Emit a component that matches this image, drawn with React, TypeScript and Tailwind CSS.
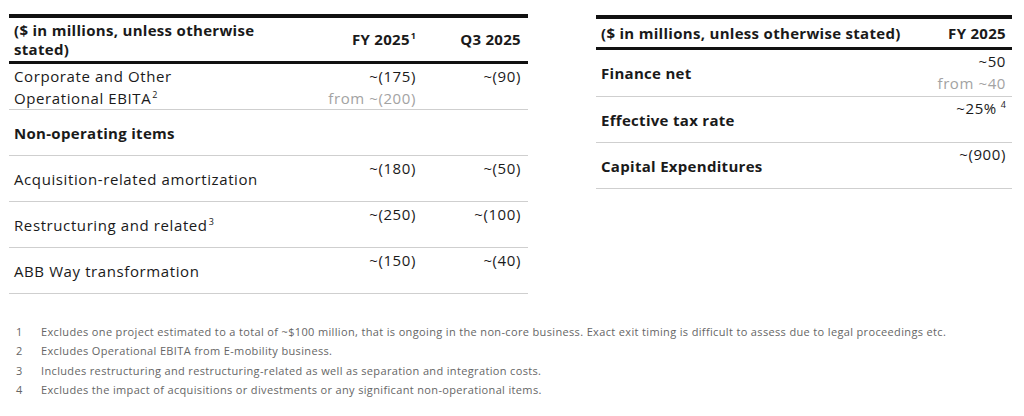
const font = { fontFamily: '"Open Sans", "Noto Sans", sans-serif' };

const Sup = ({ children, className = "" }: { children: React.ReactNode; className?: string }) => (
  <sup className={`text-[9px] tracking-normal relative -top-[6px] ${className}`}>{children}</sup>
);

type LeftRow = {
  label: React.ReactNode;
  fy?: React.ReactNode;
  q3?: React.ReactNode;
  bold?: boolean;
};

const leftRows: LeftRow[] = [
  { label: "Non-operating items", bold: true },
  { label: "Acquisition-related amortization", fy: "~(180)", q3: "~(50)" },
  {
    label: (
      <>
        Restructuring and related<Sup className="ml-[1px]">3</Sup>
      </>
    ),
    fy: "~(250)",
    q3: "~(100)",
  },
  { label: "ABB Way transformation", fy: "~(150)", q3: "~(40)" },
];

const rightRows = [
  {
    label: "Effective tax rate",
    value: (
      <>
        ~25%<Sup className="ml-[4px]">4</Sup>
      </>
    ),
  },
  { label: "Capital Expenditures", value: "~(900)" },
];

const notes = [
  "Excludes one project estimated to a total of ~$100 million, that is ongoing in the non-core business. Exact exit timing is difficult to assess due to legal proceedings etc.",
  "Excludes Operational EBITA from E-mobility business.",
  "Includes restructuring and restructuring-related as well as separation and integration costs.",
  "Excludes the impact of acquisitions or divestments or any significant non-operational items.",
];

export default function App() {
  return (
    <div className="w-[1024px] h-[416px] bg-white text-[#1a1a1a] overflow-hidden" style={font}>
      <div className="flex pt-[14px] pl-[9px]">
        {/* Left table */}
        <div className="w-[519px] text-[15px] leading-[22px] tracking-[0.6px]">
          <div className="grid grid-cols-[1fr_110px_105px] border-t-4 border-b-[3px] border-[#111] h-[50px] items-center font-bold leading-[19px] tracking-[0.3px]">
            <div className="pl-[5px]">
              ($ in millions, unless otherwise
              <br />
              stated)
            </div>
            <div className="text-right pr-[7px]">
              FY 2025<Sup className="ml-[1px]">1</Sup>
            </div>
            <div className="text-right pr-[7px]">Q3 2025</div>
          </div>

          <div className="grid grid-cols-[1fr_110px_105px] border-b border-[#cfcfcf] h-[46px] pt-[1px]">
            <div className="pl-[5px]">
              Corporate and Other
              <br />
              Operational EBITA<Sup className="ml-[1px]">2</Sup>
            </div>
            <div className="text-right pr-[7px]">
              ~(175)
              <div className="text-[#a3a3a3]">from ~(200)</div>
            </div>
            <div className="text-right pr-[7px]">~(90)</div>
          </div>

          {leftRows.map((r, i) => (
            <div
              key={i}
              className="grid grid-cols-[1fr_110px_105px] border-b border-[#cfcfcf] h-[46px]"
            >
              <div
                className={`pl-[5px] self-center ${r.bold ? "font-bold tracking-[0.3px]" : ""}`}
              >
                {r.label}
              </div>
              <div className="text-right pr-[7px] pt-[1px]">{r.fy}</div>
              <div className="text-right pr-[7px] pt-[1px]">{r.q3}</div>
            </div>
          ))}
        </div>

        {/* Right table */}
        <div className="w-[416px] ml-[68px] text-[15px] leading-[22px] pt-[1px] tracking-[0.6px]">
          <div className="flex justify-between items-center border-t-4 border-b-[3px] border-[#111] h-[35px] font-bold tracking-[0.3px]">
            <div className="pl-[5px]">($ in millions, unless otherwise stated)</div>
            <div className="pr-[6px]">FY 2025</div>
          </div>

          <div className="flex justify-between border-b border-[#cfcfcf] h-[47px]">
            <div className="pl-[5px] self-center font-bold tracking-[0.3px]">Finance net</div>
            <div className="pr-[6px] text-right">
              ~50
              <div className="text-[#a3a3a3]">from ~40</div>
            </div>
          </div>

          {rightRows.map((r, i) => (
            <div key={i} className="flex justify-between border-b border-[#cfcfcf] h-[46px]">
              <div className="pl-[5px] self-center font-bold tracking-[0.3px] pt-[1px]">
                {r.label}
              </div>
              <div className="pr-[6px] text-right">{r.value}</div>
            </div>
          ))}
        </div>
      </div>

      {/* Footnotes */}
      <div className="mt-[28px] pl-[16px] text-[11px] leading-[19.3px] tracking-[0.35px] text-[#666]">
        {notes.map((n, i) => (
          <div key={i} className="flex">
            <span className="w-[25px] shrink-0">{i + 1}</span>
            <span>{n}</span>
          </div>
        ))}
      </div>
    </div>
  );
}
